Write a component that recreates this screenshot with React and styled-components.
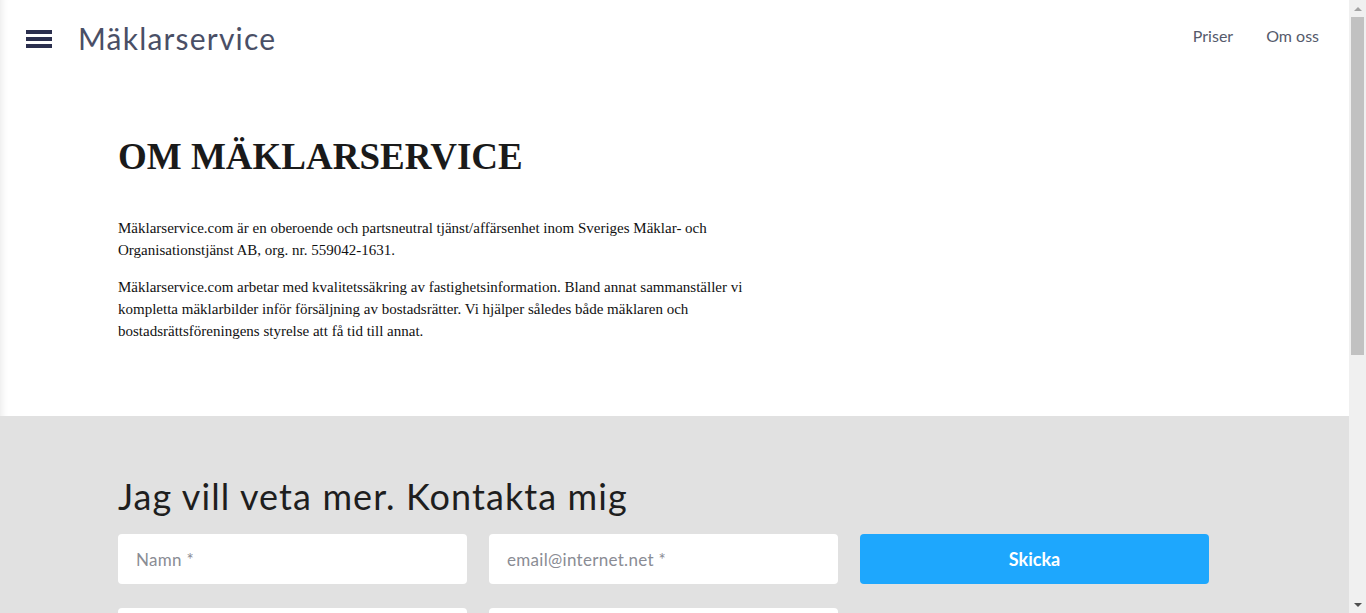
import React from 'react';
import styled, { createGlobalStyle } from 'styled-components';

const Global = createGlobalStyle`
  html, body { margin: 0; padding: 0; height: 100%; overflow: hidden; }
  body { background: #fff; font-family: Lato, "Noto Sans", sans-serif; }
  #root { height: 100%; }
  * { box-sizing: border-box; }
`;

const Frame = styled.div`
  height: 100%;
  display: flex;
`;

const Page = styled.div`
  flex: 1;
  min-width: 0;
  overflow: hidden;
  box-shadow: inset 10px 0 10px -10px rgba(0, 0, 0, 0.12);
`;

// browser scrollbar as seen in the screenshot
const ScrollTrack = styled.div`
  width: 17px;
  background: #f0f0f0;
  display: flex;
  flex-direction: column;
  align-items: center;
`;

const Arrow = styled.div`
  height: 17px;
  display: flex;
  align-items: center;
  justify-content: center;
  &::before {
    content: '';
    border-left: 4px solid transparent;
    border-right: 4px solid transparent;
    ${p => p.down
      ? 'border-top: 4px solid #505050;'
      : 'border-bottom: 4px solid #a3a3a3;'}
  }
`;

const Thumb = styled.div`
  width: 13px;
  height: 338px;
  background: #c1c1c1;
`;

const Spacer = styled.div`
  flex: 1;
`;

const Header = styled.header`
  height: 75px;
  display: flex;
  align-items: center;
  padding: 0 30px 0 26px;
`;

const Burger = styled.button`
  width: 26px;
  height: 18px;
  padding: 0;
  border: 0;
  background: transparent;
  display: flex;
  flex-direction: column;
  justify-content: space-between;
  margin-top: 2px;
  span {
    display: block;
    height: 4px;
    background: #2b2f4e;
  }
`;

const Brand = styled.a`
  margin-left: 26px;
  font-size: 30px;
  color: #4a4f66;
  letter-spacing: 1.2px;
  text-decoration: none;
`;

const Nav = styled.nav`
  margin-left: auto;
  display: flex;
  gap: 33px;
  margin-top: -4px;
`;

const NavLink = styled.a`
  font-size: 16px;
  color: #555a6b;
  text-decoration: none;
`;

const About = styled.section`
  padding: 60px 0 0 118px;
  height: 341px;
`;

const Title = styled.h1`
  font-family: "Liberation Serif", serif;
  font-weight: bold;
  font-size: 37px;
  color: #1a1a1a;
  margin: 0 0 39px;
`;

const Text = styled.p`
  font-family: "Liberation Serif", serif;
  font-size: 15px;
  line-height: 22px;
  color: #111;
  margin: 0 0 15px;
  max-width: 640px;
`;

const Contact = styled.section`
  background: #e1e1e1;
  padding: 58px 0 60px 118px;
  min-height: 500px;
`;

const ContactTitle = styled.h2`
  font-size: 36px;
  font-weight: 400;
  color: #1e1e1e;
  margin: 0 0 16px;
  letter-spacing: 1.1px;
`;

const Form = styled.form`
  display: grid;
  grid-template-columns: repeat(3, 349px);
  column-gap: 22px;
  row-gap: 24px;
`;

const Input = styled.input`
  height: 50px;
  border: 0;
  border-radius: 4px;
  background: #fff;
  padding: 0 18px;
  font-family: inherit;
  font-size: 17px;
  letter-spacing: 0.3px;
  &::placeholder { color: #8a8c94; }
`;

const Send = styled.button`
  height: 50px;
  border: 0;
  border-radius: 4px;
  background: #1ea7fd;
  color: #fff;
  font-family: inherit;
  font-weight: 700;
  font-size: 18px;
`;

export default function App() {
  return (
    <Frame>
      <Global />
      <Page>
        <Header>
          <Burger aria-label="Meny"><span /><span /><span /></Burger>
          <Brand href="#">Mäklarservice</Brand>
          <Nav>
            <NavLink href="#">Priser</NavLink>
            <NavLink href="#">Om oss</NavLink>
          </Nav>
        </Header>
        <About>
          <Title>OM MÄKLARSERVICE</Title>
          <Text>
            Mäklarservice.com är en oberoende och partsneutral tjänst/affärsenhet inom Sveriges Mäklar- och
            Organisationstjänst AB, org. nr. 559042-1631.
          </Text>
          <Text>
            Mäklarservice.com arbetar med kvalitetssäkring av fastighetsinformation. Bland annat sammanställer vi
            kompletta mäklarbilder inför försäljning av bostadsrätter. Vi hjälper således både mäklaren och
            bostadsrättsföreningens styrelse att få tid till annat.
          </Text>
        </About>
        <Contact>
          <ContactTitle>Jag vill veta mer. Kontakta mig</ContactTitle>
          <Form onSubmit={e => e.preventDefault()}>
            <Input placeholder="Namn *" />
            <Input placeholder="email@internet.net *" />
            <Send type="submit">Skicka</Send>
            <Input placeholder="Telefon" />
            <Input placeholder="Meddelande" />
          </Form>
        </Contact>
      </Page>
      <ScrollTrack>
        <Arrow />
        <Thumb />
        <Spacer />
        <Arrow down />
      </ScrollTrack>
    </Frame>
  );
}
